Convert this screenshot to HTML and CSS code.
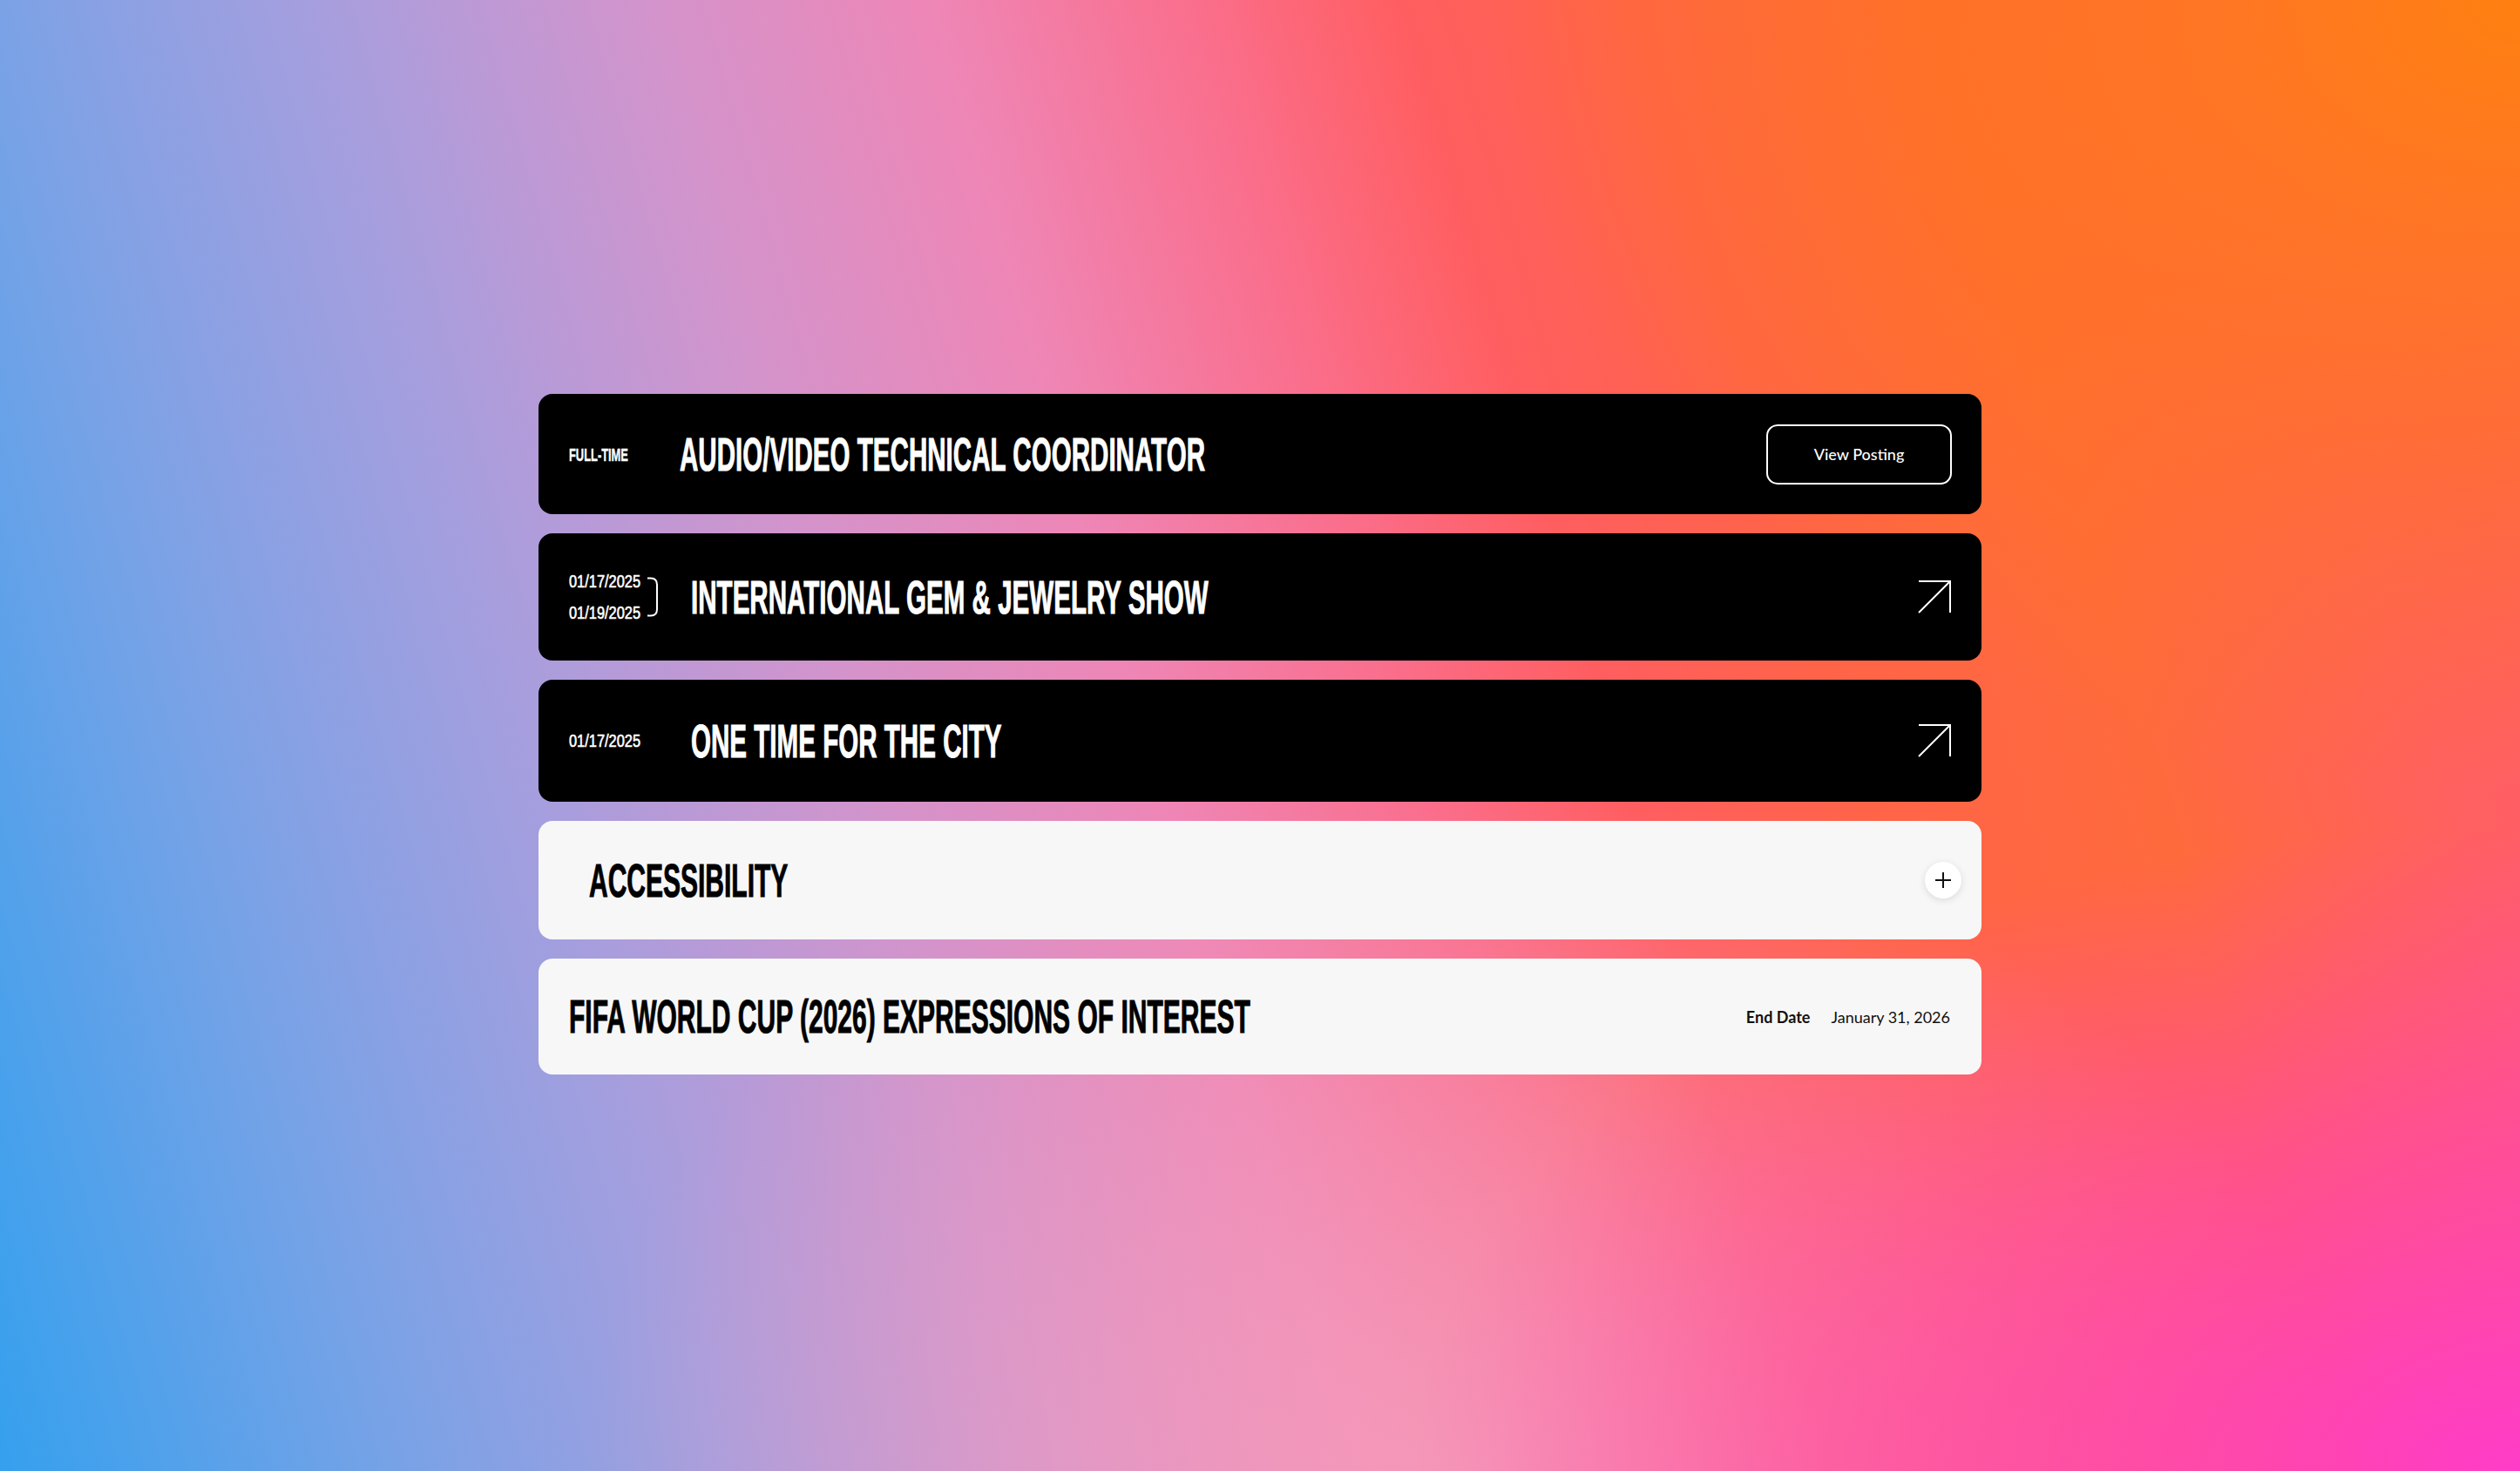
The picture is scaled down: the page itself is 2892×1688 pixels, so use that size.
FILE: index.html
```html
<!DOCTYPE html>
<html lang="en">
<head>
<meta charset="utf-8">
<title>Listings</title>
<link rel="stylesheet" href="styles.css">
</head>
<body>
<main class="page">
  <section class="list">
    <article class="card card-dark card-job">
      <div class="meta meta-job"><span class="cond cond-label">FULL-TIME</span></div>
      <h2 class="title"><span class="cond cond-title">AUDIO/VIDEO TECHNICAL COORDINATOR</span></h2>
      <a class="btn-outline" href="#">View Posting</a>
    </article>

    <article class="card card-dark card-event">
      <div class="meta meta-date">
        <div class="range">
          <div class="range-dates">
            <span class="cond cond-date">01/17/2025</span>
            <span class="cond cond-date">01/19/2025</span>
          </div>
          <svg class="bracket" width="14" height="46" viewBox="0 0 14 46" fill="none">
            <path d="M1 1.5 H5 Q12 1.5 12 9 V37 Q12 44.5 5 44.5 H1" stroke="#fff" stroke-width="2"/>
          </svg>
        </div>
      </div>
      <h2 class="title"><span class="cond cond-title">INTERNATIONAL GEM &amp; JEWELRY SHOW</span></h2>
      <svg class="arrow" width="38" height="38" viewBox="0 0 38 38" fill="none">
        <path d="M1 37 L37 1 M1 1 H37 V37" stroke="#fff" stroke-width="2"/>
      </svg>
    </article>

    <article class="card card-dark card-single">
      <div class="meta meta-date"><span class="cond cond-date">01/17/2025</span></div>
      <h2 class="title"><span class="cond cond-title">ONE TIME FOR THE CITY</span></h2>
      <svg class="arrow" width="38" height="38" viewBox="0 0 38 38" fill="none">
        <path d="M1 37 L37 1 M1 1 H37 V37" stroke="#fff" stroke-width="2"/>
      </svg>
    </article>

    <article class="card card-light card-accordion">
      <h2 class="title title-dark"><span class="cond cond-title">ACCESSIBILITY</span></h2>
      <button class="plus" type="button" aria-label="Expand">
        <svg width="20" height="20" viewBox="0 0 20 20" fill="none">
          <path d="M10 1 V19 M1 10 H19" stroke="#111" stroke-width="2"/>
        </svg>
      </button>
    </article>

    <article class="card card-light card-deadline">
      <h2 class="title title-dark"><span class="cond cond-title">FIFA WORLD CUP (2026) EXPRESSIONS OF INTEREST</span></h2>
      <div class="deadline">
        <span class="deadline-label">End Date</span>
        <span class="deadline-value">January 31, 2026</span>
      </div>
    </article>
  </section>
</main>
</body>
</html>
```

FILE: styles.css
```css
* { box-sizing: border-box; }

html, body {
  margin: 0;
  padding: 0;
}

body {
  width: 2892px;
  height: 1688px;
  overflow: hidden;
  font-family: "Lato", "Liberation Sans", sans-serif;
}

.page {
  width: 2892px;
  height: 1688px;
  padding-top: 452px;
  background:
    radial-gradient(55% 55% at 100% 100%, rgba(255, 60, 200, 1) 0%, rgba(255, 66, 190, 0.55) 45%, rgba(255, 66, 190, 0) 80%),
    radial-gradient(45% 60% at 100% 0%, rgba(255, 128, 16, 1) 0%, rgba(255, 118, 24, 0.6) 50%, rgba(255, 110, 30, 0) 90%),
    radial-gradient(35% 45% at 58% 100%, rgba(246, 160, 188, 0.75) 0%, rgba(246, 160, 188, 0) 100%),
    linear-gradient(74deg, #35a0ee 0%, #7aa2e6 14%, #a69ede 25%, #d294cc 36%, #ee86b6 46%, #fa6e8c 55%, #ff5e60 62%, #ff6448 70%, #ff6a3c 80%, #ff6060 90%, #ff5a70 100%);
}

.list {
  width: 1656px;
  margin: 0 auto;
  display: flex;
  flex-direction: column;
  gap: 22px;
}

.card {
  display: flex;
  align-items: center;
  border-radius: 16px;
  padding: 0 34px 0 35px;
}

.card-dark { background: #000; color: #fff; }
.card-light { background: #f7f7f7; color: #000; }

.card-job { height: 138px; }
.card-event { height: 146px; }
.card-single { height: 140px; }
.card-accordion { height: 136px; padding-left: 58px; padding-right: 23px; }
.card-deadline { height: 133px; padding-right: 36px; }

.cond {
  display: inline-block;
  font-family: "Liberation Sans", "Arial", sans-serif;
  font-weight: 700;
  white-space: nowrap;
  transform-origin: left center;
}

.meta { flex: none; display: flex; align-items: center; }
.meta-job { width: 127px; }
.meta-date { width: 140px; }

.cond-label {
  font-size: 21px;
  line-height: 1;
  transform: scaleX(0.613);
  -webkit-text-stroke: 0.4px currentColor;
}

.cond-date {
  font-size: 20px;
  line-height: 36px;
  font-weight: 400;
  transform: scaleX(0.82);
  -webkit-text-stroke: 0.6px currentColor;
}

.range { display: flex; align-items: center; gap: 6px; }
.range-dates { display: flex; flex-direction: column; width: 83px; }
.bracket { display: block; }

.title {
  margin: 0;
  flex: 1;
  min-width: 0;
  font-weight: 700;
  line-height: 1;
}

.cond-title {
  font-size: 53px;
  line-height: 1;
  transform: scaleX(0.558);
  -webkit-text-stroke: 1px currentColor;
}

.title-dark .cond-title {
  transform: scaleX(0.566);
}

.btn-outline {
  flex: none;
  width: 213px;
  height: 69px;
  display: flex;
  align-items: center;
  justify-content: center;
  border: 2px solid #fff;
  border-radius: 13px;
  color: #fff;
  text-decoration: none;
  font-family: "Lato", "Liberation Sans", sans-serif;
  font-size: 18px;
  font-weight: 500;
}

.arrow { flex: none; display: block; margin-right: 1px; }

.plus {
  flex: none;
  width: 42px;
  height: 42px;
  border: 0;
  padding: 0;
  border-radius: 50%;
  background: #fff;
  box-shadow: 0 2px 8px rgba(0, 0, 0, 0.12);
  display: flex;
  align-items: center;
  justify-content: center;
}

.plus svg { display: block; }

.deadline {
  flex: none;
  display: flex;
  align-items: center;
  gap: 24px;
  font-family: "Lato", "Liberation Sans", sans-serif;
  font-size: 18px;
  color: #111;
}

.deadline-label { font-weight: 700; }
.deadline-value { font-weight: 400; }
```
